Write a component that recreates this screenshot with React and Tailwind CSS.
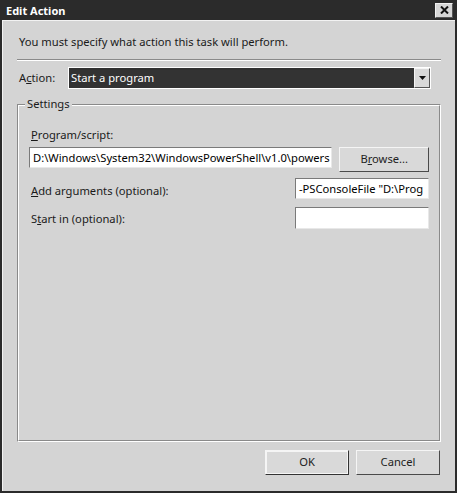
const font = { fontFamily: '"Noto Sans", "Open Sans", sans-serif' };

const Field = ({ value, className }) => (
    <div
        className={`h-[21px] bg-white border border-[#7a7a7a] border-b-[#e8e8e8] border-r-[#e8e8e8] px-[3px] text-[11.2px] leading-[19px] text-black overflow-hidden whitespace-nowrap ${className}`}
    >
        {value}
    </div>
);

const Button = ({ children, className }) => (
    <button
        className={`h-[25px] bg-[#d9d9d9] border border-[#f5f5f5] border-b-[#4a4a4a] border-r-[#4a4a4a] text-[11.2px] text-[#222] ${className}`}
    >
        {children}
    </button>
);

export default function App() {
    return (
        <div
            className="w-[457px] h-[493px] bg-[#2b2b2b] p-[2px] pt-0 flex flex-col"
            style={font}
        >
            <div className="h-[20px] flex items-center justify-between pl-[4px] pr-[2px]">
                <span className="text-white font-bold text-[11px] leading-none">
                    Edit Action
                </span>
                <div className="w-[18px] h-[15px] bg-[#d6d6d6] border border-[#f0f0f0] border-b-[#555] border-r-[#555] flex items-center justify-center">
                    <svg width="9" height="8" viewBox="0 0 9 8">
                        <path d="M1 0.5 L8 7.5 M8 0.5 L1 7.5" stroke="#111" strokeWidth="2" />
                    </svg>
                </div>
            </div>
            <div className="flex-1 bg-[#d4d4d4] border-l border-t border-[#f2f2f2] flex flex-col px-[14px] text-[11.2px] text-[#1a1a1a]">
                <div className="pt-[13px] pl-[2px] h-[38px]">
                    You must specify what action this task will perform.
                </div>
                <div className="border-t border-[#8a8a8a] border-b border-b-white" />
                <div className="flex items-center mt-[6px] h-[22px]">
                    <span className="w-[51px] pl-[2px]">
                        A<span className="underline">c</span>tion:
                    </span>
                    <div className="flex-1 mr-[10px] h-[22px] border border-white flex">
                        <div className="flex-1 bg-[#333] text-white px-[2px] leading-[20px]">
                            Start a program
                        </div>
                        <div className="w-[16px] bg-[#d9d9d9] border border-[#f5f5f5] border-b-[#555] border-r-[#555] flex items-center justify-center">
                            <svg width="7" height="4" viewBox="0 0 7 4">
                                <path d="M0 0 H7 L3.5 4 Z" fill="#111" />
                            </svg>
                        </div>
                    </div>
                </div>
                <div className="relative mt-[15px] h-[338px] border border-[#8a8a8a] border-b-white border-r-white">
                    <div className="absolute inset-0 border border-white border-b-[#8a8a8a] border-r-[#8a8a8a]" />
                    <span className="absolute -top-[9px] left-[7px] bg-[#d4d4d4] px-[2px]">
                        Settings
                    </span>
                    <div className="relative flex flex-col px-[11px] pt-[22px]">
                        <span className="pl-[2px]">
                            <span className="underline">P</span>rogram/script:
                        </span>
                        <div className="flex gap-[7px] mt-[3px]">
                            <Field
                                value="D:\Windows\System32\WindowsPowerShell\v1.0\powers"
                                className="w-[305px]"
                            />
                            <Button className="w-[90px] h-[24px]">
                                B<span className="underline">r</span>owse...
                            </Button>
                        </div>
                        <div className="flex items-center justify-between mt-[6px]">
                            <span className="pl-[2px] pt-[5px]">
                                <span className="underline">A</span>dd arguments (optional):
                            </span>
                            <Field
                                value='-PSConsoleFile "D:\Prog'
                                className="w-[134px]"
                            />
                        </div>
                        <div className="flex items-center justify-between mt-[7px]">
                            <span className="pl-[2px] pt-[3px]">
                                S<span className="underline">t</span>art in (optional):
                            </span>
                            <Field value="" className="w-[134px] h-[22px]" />
                        </div>
                    </div>
                </div>
                <div className="flex justify-end gap-[7px] mt-[8px] pr-[1px]">
                    <Button className="w-[84px] border-[#333] border-b-[#333] border-r-[#333] outline outline-1 outline-[#f5f5f5] -outline-offset-2">
                        OK
                    </Button>
                    <Button className="w-[84px]">Cancel</Button>
                </div>
            </div>
        </div>
    );
}
